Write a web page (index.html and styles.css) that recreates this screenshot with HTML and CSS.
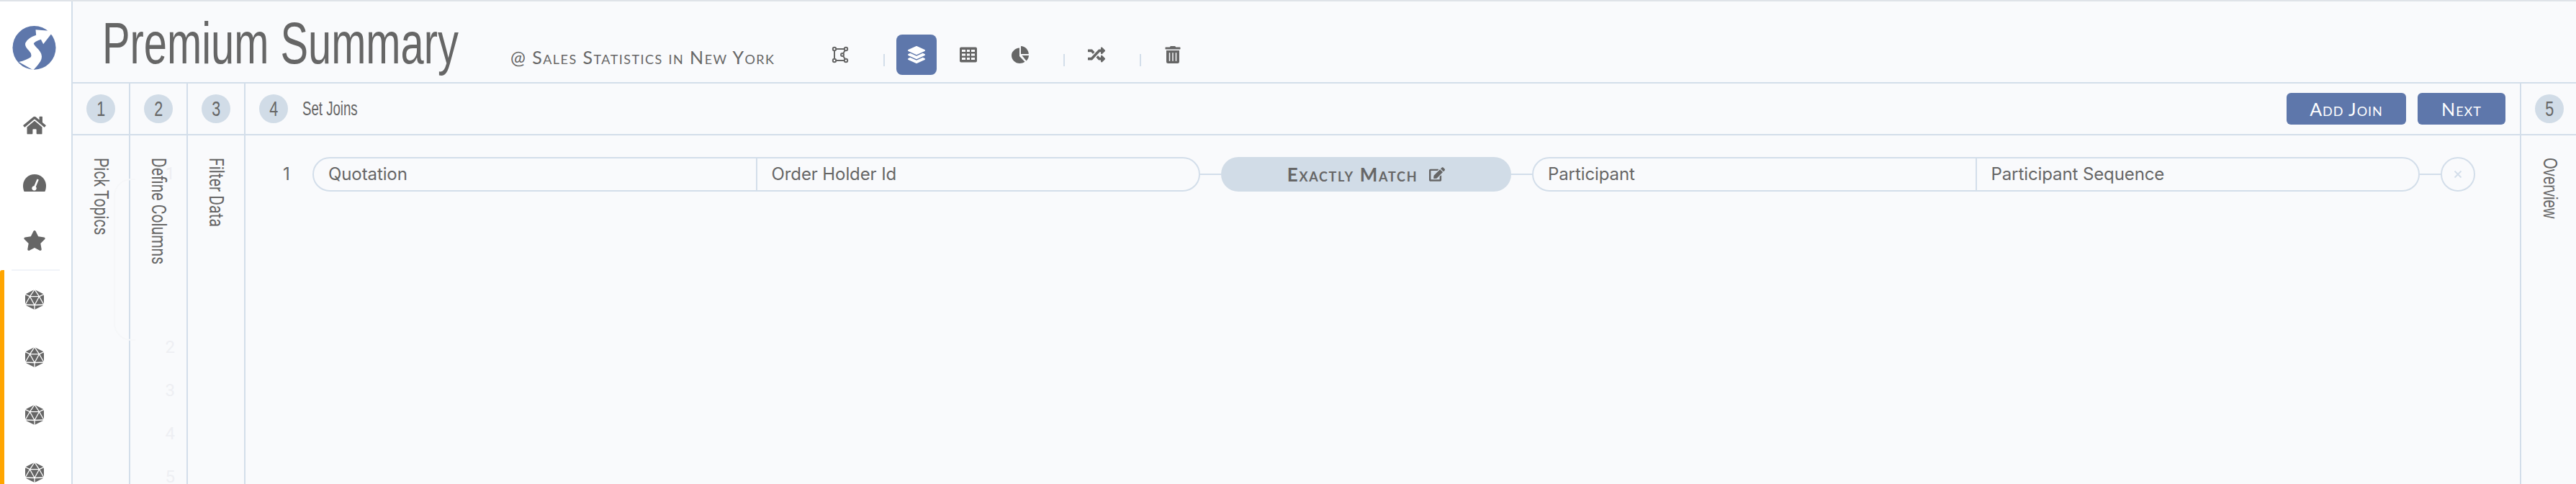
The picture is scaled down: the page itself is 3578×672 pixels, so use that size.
FILE: index.html
```html
<!DOCTYPE html>
<html lang="en">
<head>
    <meta charset="UTF-8">
    <title>Premium Summary</title>
    <link rel="stylesheet" href="styles.css">
</head>
<body>

    <div class="app">
        <!-- Left navigation -->
        <nav class="sidebar">
            <svg class="logo" viewBox="22 22 180 183">
                <ellipse cx="112" cy="113" rx="90" ry="91" fill="#5e77ab"/>
                <path fill="#fff" d="M48 172Q80 165 98 152Q104 140 90 125Q70 105 76 92Q84 72 120 60L118 38L192 44L150 98L140 78Q112 88 110 95Q112 104 130 120Q152 145 138 170Q125 190 108 206Z"/>
            </svg>
            <a class="nav-item"><svg class="nav-icon" viewBox="0 0 576 512"><path d="M280.37 148.26L96 300.11V464a16 16 0 0 0 16 16l112.06-.29a16 16 0 0 0 15.92-16V368a16 16 0 0 1 16-16h64a16 16 0 0 1 16 16v95.64a16 16 0 0 0 16 16.05L464 480a16 16 0 0 0 16-16V300L295.67 148.26a12.19 12.19 0 0 0-15.3 0zM571.6 251.47L488 182.56V44.05a12 12 0 0 0-12-12h-56a12 12 0 0 0-12 12v72.61L318.47 43a48 48 0 0 0-61 0L4.34 251.47a12 12 0 0 0-1.6 16.9l25.5 31A12 12 0 0 0 45.15 301l235.22-193.74a12.19 12.19 0 0 1 15.3 0L530.9 301a12 12 0 0 0 16.9-1.6l25.5-31a12 12 0 0 0-1.7-16.93z"/></svg></a>
            <a class="nav-item"><svg class="nav-icon" viewBox="0 0 32 24"><path d="M16 0C7 0 0 7 0 16c0 3 .6 5.600 1.600 8H30.400C31.400 21.600 32 19 32 16 32 7 25 0 16 0z"/><path fill="#fff" d="M19.500 6.500L21.800 7.500 17.800 17.200A3.200 3.200 0 1 1 15.400 16.200z"/></svg></a>
            <a class="nav-item"><svg class="nav-icon" viewBox="0 0 576 512"><path d="M259.3 17.8L194 150.2 47.900 171.500c-26.200 3.800-36.700 36.100-17.700 54.600l105.700 103-25 145.500c-4.500 26.300 23.200 46 46.400 33.700L288 439.600l130.700 68.700c23.200 12.200 50.900-7.400 46.400-33.700l-25-145.500 105.700-103c19-18.500 8.500-50.800-17.700-54.600L382 150.200 316.700 17.800c-11.700-23.600-45.600-23.900-57.400 0z"/></svg></a>
            <div class="nav-divider"></div>
            <div class="nav-connected">
                <a class="nav-item"><svg class="nav-icon shape"><use href="#shape"/></svg></a>
                <a class="nav-item"><svg class="nav-icon shape"><use href="#shape"/></svg></a>
                <a class="nav-item"><svg class="nav-icon shape"><use href="#shape"/></svg></a>
                <a class="nav-item"><svg class="nav-icon shape"><use href="#shape"/></svg></a>
            </div>
        </nav>

        <main class="content">
            <header class="page-header">
                <h1 class="page-title"><span>Premium Summary</span></h1>
                <div class="page-sub">@ Sales Statistics in New York</div>
                <div class="tools">
                    <button class="tool">
                        <svg class="tool-icon outline" viewBox="0 0 24 24"><path d="M4 4H20L15 12L20 20H4z"/><circle cx="4" cy="4" r="2.200"/><circle cx="20" cy="4" r="2.200"/><circle cx="4" cy="20" r="2.200"/><circle cx="20" cy="20" r="2.200"/><circle cx="15" cy="12" r="2"/></svg>
                    </button>
                    <i class="tool-sep"></i>
                    <button class="tool active">
                        <svg class="tool-icon" viewBox="0 0 512 512"><path d="M12.410 148.020l232.940 105.670c6.800 3.090 14.490 3.090 21.290 0l232.940-105.670c16.550-7.510 16.550-32.520 0-40.030L266.650 2.310a25.607 25.607 0 0 0-21.290 0L12.410 107.980c-16.550 7.510-16.550 32.530 0 40.040zm487.180 88.280l-58.090-26.330-161.640 73.270c-7.560 3.430-15.590 5.170-23.860 5.170s-16.290-1.740-23.860-5.170L70.510 209.970l-58.100 26.330c-16.550 7.500-16.550 32.500 0 40l232.940 105.590c6.800 3.080 14.490 3.080 21.290 0L499.59 276.300c16.550-7.500 16.550-32.500 0-40zm0 127.800l-57.870-26.230-161.860 73.370c-7.560 3.430-15.590 5.170-23.860 5.170s-16.290-1.740-23.860-5.170L70.290 337.870 12.410 364.100c-16.550 7.500-16.550 32.500 0 40l232.940 105.590c6.800 3.080 14.490 3.080 21.290 0L499.59 404.100c16.550-7.500 16.550-32.500 0-40z"/></svg>
                    </button>
                    <button class="tool">
                        <svg class="tool-icon" viewBox="0 0 24 24"><path fill-rule="evenodd" d="M2 1.500H22A2 2 0 0 1 24 3.500V20.500A2 2 0 0 1 22 22.500H2A2 2 0 0 1 0 20.500V3.500A2 2 0 0 1 2 1.500zM3 5V8H8V5zM10 5V8H14V5zM16 5V8H21V5zM3 10.500V13.500H8V10.500zM10 10.500V13.500H14V10.500zM16 10.500V13.500H21V10.500zM3 16V19H8V16zM10 16V19H14V16zM16 16V19H21V16z"/></svg>
                    </button>
                    <button class="tool">
                        <svg class="tool-icon" viewBox="0 0 24 24"><path d="M11 2.500V14L18.500 21.800C16.400 23.200 14 24 11.500 24 5 24 0 19 0 13 0 7.500 5 3 11 2.500z"/><path d="M13 0C19 .2 23.500 5 23.800 11H13z"/><path d="M14.500 13H24C23.800 16 22.600 18.700 20.500 20.500z"/></svg>
                    </button>
                    <i class="tool-sep"></i>
                    <button class="tool">
                        <svg class="tool-icon" viewBox="0 0 512 512"><path d="M504.971 359.029c9.373 9.373 9.373 24.569 0 33.941l-80 79.984c-15.010 15.010-40.971 4.490-40.971-16.971V416h-58.785a12.004 12.004 0 0 1-8.773-3.812l-70.556-75.596 53.333-57.143L352 336h32v-39.981c0-21.438 25.943-31.998 40.971-16.971l80 79.981zM12 176h84l52.781 56.551 53.333-57.143-70.556-75.596A11.999 11.999 0 0 0 122.785 96H12c-6.627 0-12 5.373-12 12v56c0 6.627 5.373 12 12 12zm372 0v39.984c0 21.460 25.961 31.980 40.971 16.971l80-79.984c9.373-9.373 9.373-24.569 0-33.941l-80-79.981C409.943 24.021 384 34.582 384 56.019V96h-58.785a12.004 12.004 0 0 0-8.773 3.812L96 336H12c-6.627 0-12 5.373-12 12v56c0 6.627 5.373 12 12 12h110.785c3.326 0 6.503-1.381 8.773-3.812L352 176h32z"/></svg>
                    </button>
                    <i class="tool-sep"></i>
                    <button class="tool">
                        <svg class="tool-icon" viewBox="0 0 448 512"><path d="M32 464a48 48 0 0 0 48 48h288a48 48 0 0 0 48-48V128H32zm272-256a16 16 0 0 1 32 0v224a16 16 0 0 1-32 0zm-96 0a16 16 0 0 1 32 0v224a16 16 0 0 1-32 0zm-96 0a16 16 0 0 1 32 0v224a16 16 0 0 1-32 0zM432 32H312l-9.400-18.700A24 24 0 0 0 281.100 0H166.800a23.720 23.720 0 0 0-21.400 13.300L136 32H16A16 16 0 0 0 0 48v32a16 16 0 0 0 16 16h416a16 16 0 0 0 16-16V48a16 16 0 0 0-16-16z"/></svg>
                    </button>
                </div>
            </header>

            <div class="steps">
                <section class="step">
                    <div class="step-head"><span class="step-no"><span>1</span></span></div>
                    <div class="step-body"><span class="step-label">Pick Topics</span><div class="ghost-pill"></div></div>
                </section>
                <section class="step">
                    <div class="step-head"><span class="step-no"><span>2</span></span></div>
                    <div class="step-body">
                        <span class="step-label">Define Columns</span>
                        <span class="ghost-no n1">1</span>
                        <span class="ghost-no n2">2</span>
                        <span class="ghost-no n3">3</span>
                        <span class="ghost-no n4">4</span>
                        <span class="ghost-no n5">5</span>
                    </div>
                </section>
                <section class="step">
                    <div class="step-head"><span class="step-no"><span>3</span></span></div>
                    <div class="step-body"><span class="step-label">Filter Data</span></div>
                </section>

                <section class="step step-current">
                    <div class="step-head">
                        <span class="step-no"><span>4</span></span>
                        <span class="step-name">Set Joins</span>
                        <div class="step-actions">
                            <button class="btn btn-add">Add Join</button>
                            <button class="btn btn-next">Next</button>
                        </div>
                    </div>
                    <div class="joins">
                        <div class="join-row">
                            <span class="join-index">1</span>
                            <div class="factor">
                                <div class="factor-cell">Quotation</div>
                                <div class="factor-cell">Order Holder Id</div>
                            </div>
                            <i class="link-line"></i>
                            <div class="join-type">
                                <span>Exactly Match</span>
                                <svg class="edit-icon" viewBox="0 0 576 512"><path d="M402.600 83.200l90.200 90.200c3.800 3.800 3.800 10 0 13.800L274.400 405.600l-92.800 10.300c-12.400 1.400-22.900-9.100-21.500-21.500l10.300-92.800L388.800 83.200c3.800-3.800 10-3.800 13.800 0zm162-22.900l-48.800-48.800c-15.200-15.200-39.900-15.200-55.200 0l-35.400 35.400c-3.800 3.800-3.800 10 0 13.800l90.200 90.200c3.800 3.800 10 3.800 13.800 0l35.400-35.400c15.200-15.300 15.200-40 0-55.200zM384 346.200V448H64V128h229.800c3.200 0 6.200-1.300 8.500-3.500l40-40c7.600-7.600 2.200-20.500-8.500-20.500H48C21.500 64 0 85.500 0 112v352c0 26.500 21.500 48 48 48h352c26.500 0 48-21.500 48-48V306.200c0-10.700-12.900-16-20.500-8.500l-40 40c-2.200 2.300-3.500 5.300-3.500 8.500z"/></svg>
                            </div>
                            <i class="link-line"></i>
                            <div class="factor">
                                <div class="factor-cell">Participant</div>
                                <div class="factor-cell">Participant Sequence</div>
                            </div>
                            <i class="link-line"></i>
                            <button class="remove-join">
                                <svg viewBox="0 0 16 16"><path d="M2 2L14 14M14 2L2 14"/></svg>
                            </button>
                        </div>
                    </div>
                </section>

                <section class="step step-last">
                    <div class="step-head"><span class="step-no"><span>5</span></span></div>
                    <div class="step-body"><span class="step-label overview">Overview</span></div>
                </section>
            </div>
        </main>
    </div>

    <!-- shared sidebar icon -->
    <svg class="defs" width="0" height="0">
        <symbol id="shape" viewBox="0 0 28 28">
            <path d="M14 0L25 5.500Q27 6.500 27 9V19Q27 21.500 25 22.500L14 28 3 22.500Q1 21.500 1 19V9Q1 6.500 3 5.500z"/>
            <path fill="none" stroke="#fff" stroke-width="1.300" d="M14 0L7.500 9.700H20.500L14 0M7.500 9.700L14 21.500 20.500 9.700M7.500 9.700L0 6M20.500 9.700L28 6M7.500 9.700L1 21M20.500 9.700L27 21M0 21L14 21.500 28 21M14 21.500V28"/>
        </symbol>
    </svg>

</body>
</html>
```

FILE: styles.css
```css
* {
    box-sizing: border-box;
}

body {
    margin: 0;
    height: 672px;
    overflow: hidden;
    background-color: #f9fafc;
    color: #666;
    font-family: 'Inter', sans-serif;
    border-top: 2px solid #dfe3e8;
}

.defs {
    position: absolute;
}

.app {
    display: flex;
    height: 670px;
}

/* Sidebar */
.sidebar {
    width: 99px;
    flex: none;
    background-color: #fff;
    display: flex;
    flex-direction: column;
    align-items: stretch;
    overflow: hidden;
}

.logo {
    width: 61px;
    height: 61px;
    margin: 34px 0 0 17px;
    flex: none;
}

.nav-item {
    height: 80px;
    flex: none;
    display: flex;
    align-items: center;
    justify-content: center;
    padding-right: 4px;
}

.sidebar > .nav-item:nth-of-type(1) {
    margin-top: 37px;
}

.nav-icon {
    width: 32px;
    height: 28px;
    fill: #666;
}

.nav-icon.shape {
    width: 28px;
}

.nav-divider {
    height: 2px;
    margin: 0 16px;
    flex: none;
    background-color: #f1f3f8;
}

.nav-connected {
    border-left: 6px solid #ffa500;
    border-top-left-radius: 3px;
    flex: 1;
    margin-top: -1px;
    padding-top: 1px;
}

.nav-connected .nav-item {
    padding-right: 10px;
}

/* Main */
.content {
    flex: 1;
    min-width: 0;
    display: flex;
    flex-direction: column;
}

.page-header {
    height: 114px;
    flex: none;
    display: flex;
    align-items: flex-start;
    border-left: 2px solid #d3deea;
    border-bottom: 2px solid #d3deea;
}

.page-title {
    margin: 13px 0 0 41px;
    width: 493px;
    flex: none;
    font-family: 'Liberation Sans', sans-serif;
    font-size: 81px;
    line-height: 90px;
    font-weight: 400;
    white-space: nowrap;
}

/* no condensed face installed, so squeeze the title */
.page-title span {
    display: inline-block;
    transform-origin: left center;
    transform: scaleX(0.714);
}

.page-sub {
    margin-left: 74px;
    margin-top: 60px;
    width: 400px;
    flex: none;
    font-family: 'Lato', sans-serif;
    font-variant: small-caps;
    font-size: 25px;
    line-height: 34px;
    letter-spacing: 1.45px;
    white-space: nowrap;
}

.tools {
    display: flex;
    align-items: center;
    height: 56px;
    margin-top: 46px;
    margin-left: 14px;
}

.tool {
    width: 56px;
    height: 56px;
    margin-left: 16px;
    padding: 0;
    border: none;
    border-radius: 8px;
    background: transparent;
    display: flex;
    align-items: center;
    justify-content: center;
}

.tool.active {
    background-color: #5e77ab;
}

.tool-icon {
    width: 24px;
    height: 24px;
    fill: #666;
}

.tool-icon.outline {
    fill: none;
    stroke: #666;
    stroke-width: 2;
}

.tool-icon.outline circle {
    fill: #f9fafc;
}

.tool.active .tool-icon {
    fill: #fff;
}

.tool-sep {
    width: 2px;
    height: 17px;
    margin-left: 32px;
    margin-top: 14px;
    background-color: #d3deea;
}

/* Steps */
.steps {
    flex: 1;
    display: flex;
    min-height: 0;
}

.step {
    width: 80px;
    flex: none;
    display: flex;
    flex-direction: column;
    border-left: 2px solid #d3deea;
}

.step-current {
    flex: 1;
    width: auto;
}

.step-last {
    width: 78px;
}

.step-head {
    height: 72px;
    flex: none;
    display: flex;
    align-items: center;
    padding-left: 19px;
    border-bottom: 2px solid #d3deea;
}

.step-no {
    width: 40px;
    height: 40px;
    flex: none;
    border-radius: 50%;
    background-color: #d1dce7;
    text-align: center;
    font-family: 'Liberation Sans', sans-serif;
    font-size: 30px;
    line-height: 40px;
}

.step-no span {
    display: inline-block;
    transform: scaleX(0.72);
}

.step-name {
    margin-left: 20px;
    font-family: 'Liberation Sans', sans-serif;
    font-size: 27px;
    transform-origin: left center;
    transform: scaleX(0.69);
}

.step-actions {
    margin-left: auto;
    display: flex;
    gap: 16px;
    padding-right: 20px;
}

.btn {
    height: 44px;
    padding: 0;
    border: none;
    border-radius: 6px;
    background-color: #5e77ab;
    color: #fff;
    font-family: 'Lato', sans-serif;
    font-variant: small-caps;
    font-size: 25px;
    letter-spacing: 1px;
}

.btn-add {
    width: 166px;
}

.btn-next {
    width: 122px;
}

.step-body {
    flex: 1;
    position: relative;
    display: flex;
    justify-content: center;
    padding-top: 31px;
}

.step-label {
    writing-mode: vertical-rl;
    font-family: 'Roboto', sans-serif;
    font-size: 27px;
    line-height: 28px;
    height: 200px;
    transform-origin: top center;
    transform: scaleY(0.78);
}

.step-label.overview {
    font-family: 'Liberation Sans', sans-serif;
    font-size: 27px;
    margin-left: 3px;
    transform: scaleY(0.75);
}

.ghost-no {
    position: absolute;
    right: 16px;
    color: #eeeff3;
    font-family: 'Roboto', sans-serif;
    font-size: 24px;
    line-height: 24px;
}

.n1 { top: 41px; }
.n2 { top: 282px; }
.n3 { top: 342px; }
.n4 { top: 402px; }
.n5 { top: 462px; }

.ghost-pill {
    position: absolute;
    left: 57px;
    top: 60px;
    width: 30px;
    height: 225px;
    border: 2px solid #f6f7f9;
    border-right: none;
    border-radius: 24px 0 0 24px;
}

/* Joins */
.joins {
    flex: 1;
    padding: 30px 62px 0 0;
}

.join-row {
    display: flex;
    align-items: center;
    height: 48px;
    position: relative;
    padding-left: 93px;
}

.join-index {
    position: absolute;
    left: 52px;
    font-size: 24px;
    line-height: 48px;
}

.factor {
    flex: 1;
    height: 48px;
    display: flex;
    border: 2px solid #d3deea;
    border-radius: 24px;
}

.factor-cell {
    flex: 1;
    padding-left: 20px;
    font-size: 24px;
    line-height: 44px;
    letter-spacing: -0.1px;
    white-space: nowrap;
}

.factor-cell + .factor-cell {
    border-left: 2px solid #d3deea;
}

.link-line {
    width: 29px;
    height: 2px;
    flex: none;
    background-color: #d3deea;
}

.join-type {
    width: 403px;
    height: 48px;
    flex: none;
    border-radius: 24px;
    background-color: #d1dce7;
    display: flex;
    align-items: center;
    justify-content: center;
    gap: 16px;
    font-family: 'Lato', sans-serif;
    font-variant: small-caps;
    font-size: 26px;
    font-weight: 700;
    letter-spacing: 1.7px;
}

.edit-icon {
    width: 22px;
    height: 20px;
    fill: #666;
}

.remove-join {
    width: 48px;
    height: 48px;
    flex: none;
    padding: 0;
    border: 2px solid #d3deea;
    border-radius: 50%;
    background: transparent;
    display: flex;
    align-items: center;
    justify-content: center;
}

.remove-join svg {
    width: 12px;
    height: 12px;
    fill: none;
    stroke: #d3deea;
    stroke-width: 2.400;
}
```
